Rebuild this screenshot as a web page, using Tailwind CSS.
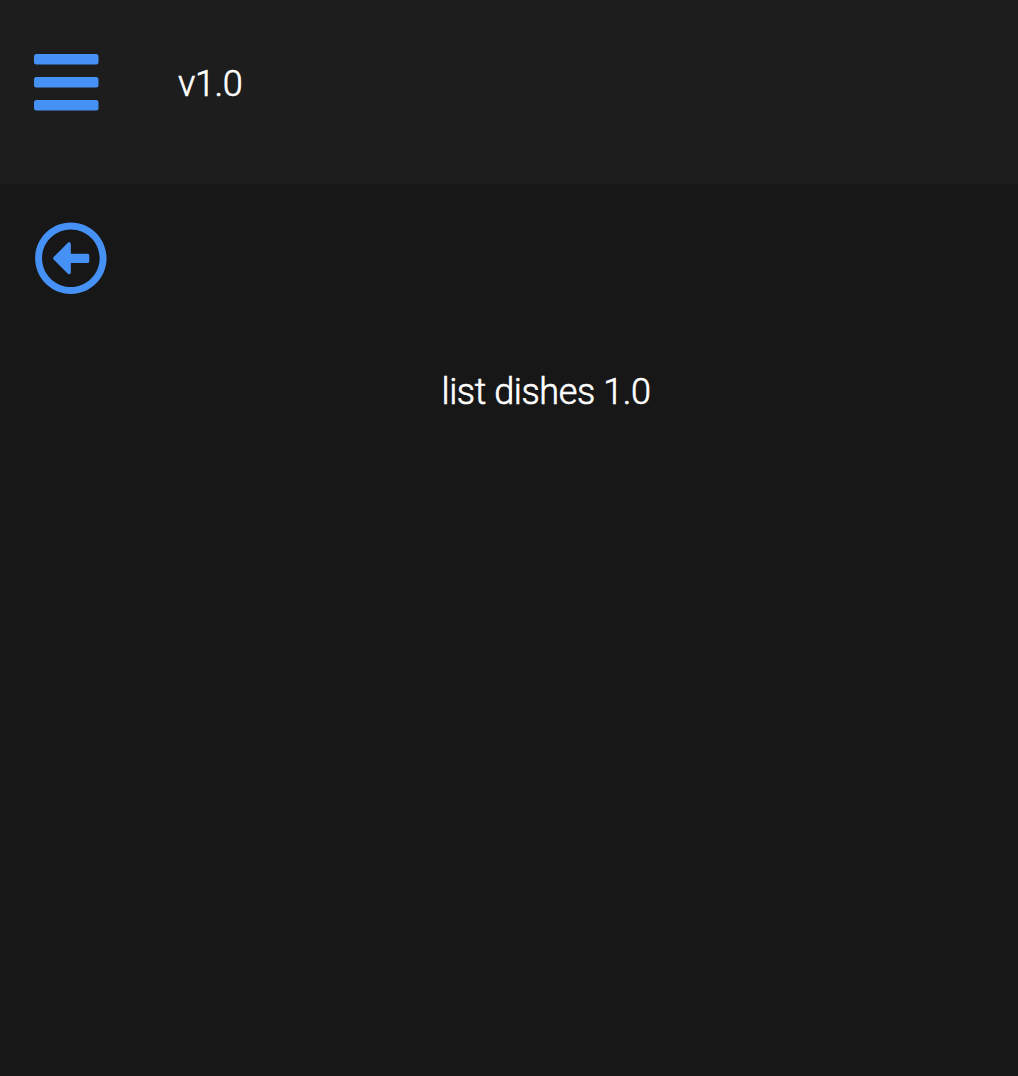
<!DOCTYPE html>
<html lang="en">
<head>
<meta charset="utf-8">
<title>Dishes</title>
<script src="https://cdn.jsdelivr.net/npm/@tailwindcss/browser@4"></script>
</head>
<body class="min-h-screen overflow-hidden bg-[#171717] font-['Roboto',sans-serif] text-[36px] leading-[54px] font-light tracking-[-0.4px] text-white [-webkit-text-stroke:0.6px_white]">
<header class="flex h-[184px] items-start bg-[#1d1d1d] pl-[34px]">
  <button class="mt-[45px]" aria-label="Menu">
    <svg class="block h-[73.7px] w-[64.5px] fill-[#4691f6]" viewBox="0 -3 448 512"><path d="M16 132h416c8.837 0 16-7.163 16-16V76c0-8.837-7.163-16-16-16H16C7.163 60 0 67.163 0 76v40c0 8.837 7.163 16 16 16zm0 160h416c8.837 0 16-7.163 16-16v-40c0-8.837-7.163-16-16-16H16c-8.837 0-16 7.163-16 16v40c0 8.837 7.163 16 16 16zm0 160h416c8.837 0 16-7.163 16-16v-40c0-8.837-7.163-16-16-16H16c-8.837 0-16 7.163-16 16v40c0 8.837 7.163 16 16 16z"/></svg>
  </button>
  <span class="ml-[79.5px] mt-[57px]">v1.0</span>
</header>
<main class="flex flex-col pt-[37px]">
  <button class="ml-[34px] self-start" aria-label="Back">
    <svg class="block size-[73.7px] fill-[#4691f6]" viewBox="0 -3 512 512"><path d="M8 256c0 137 111 248 248 248s248-111 248-248S393 8 256 8 8 119 8 256zm448 0c0 110.500-89.500 200-200 200S56 366.500 56 256 145.500 56 256 56s200 89.500 200 200zm-72-20v40c0 6.600-5.400 12-12 12H256v67c0 10.700-12.900 16-20.500 8.500l-99-99c-4.700-4.700-4.700-12.300 0-17l99-99c7.600-7.600 20.500-2.200 20.500 8.500v67h116c6.600 0 12 5.400 12 12z"/></svg>
  </button>
  <p class="mt-[70.5px] pl-[74px] text-center">list dishes 1.0</p>
</main>
</body>
</html>
